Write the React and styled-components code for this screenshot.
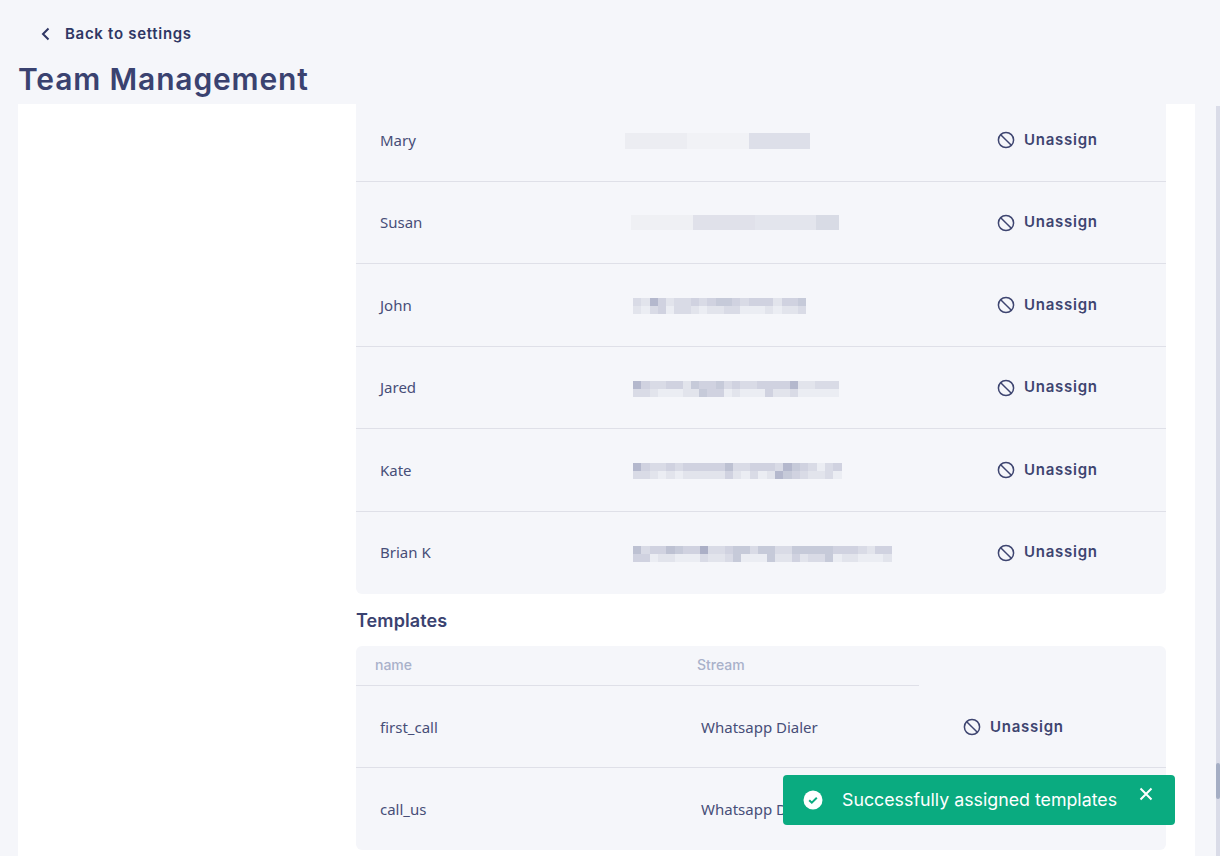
import styled, { createGlobalStyle } from 'styled-components'

const GlobalStyle = createGlobalStyle`
  html, body {
    margin: 0;
    padding: 0;
    background: #f5f6fa;
  }
`

const Page = styled.div`
  position: relative;
  width: 1220px;
  height: 856px;
  overflow: hidden;
  display: flex;
  flex-direction: column;
  background: #f5f6fa;
  color: #3a4270;
  font-family: 'Noto Sans', sans-serif;
`

const Header = styled.header`
  height: 104px;
  flex: none;
  box-sizing: border-box;
  padding: 24px 0 0 18px;
`

const BackLink = styled.a`
  display: flex;
  align-items: center;
  gap: 15px;
  height: 20px;
  padding-left: 23px;
  font: 600 15px/20px Inter, sans-serif;
  letter-spacing: 0.7px;
  color: #2f3664;
`

const Title = styled.h1`
  margin: 14px 0 0;
  font: 600 30px/42px Inter, sans-serif;
  letter-spacing: 0.85px;
  color: #3a4270;
`

const Panel = styled.main`
  flex: 1;
  min-height: 0;
  overflow: hidden;
  margin: 0 25px 0 18px;
  background: #fff;
  padding: 0 29px 0 338px;
`

const Content = styled.div`
  margin-top: -4.8px;
`

const Table = styled.section`
  background: #f5f6fa;
  border-radius: 6px;
`

const Row = styled.div`
  display: grid;
  grid-template-columns: ${(props) => props.$columns};
  align-items: center;
  height: ${(props) => props.$height};
  box-sizing: border-box;
  border-bottom: 1px solid ${(props) => (props.$last ? 'transparent' : '#dfe0e8')};
`

const Cell = styled.div`
  padding-left: 24px;
  font-size: 15px;
  line-height: 20px;
  color: #474e78;
`

const Action = styled.button`
  display: flex;
  align-items: center;
  gap: 9px;
  padding: 0;
  border: 0;
  background: none;
  font: 600 15px/20px Inter, sans-serif;
  letter-spacing: 0.75px;
  color: #3e4570;
`

const ActionIcon = styled.svg`
  width: 18px;
  height: 18px;
  flex: none;
  margin-top: 1px;
`

const Redacted = styled.div`
  margin-left: ${(props) => props.$offset}px;
  margin-top: ${(props) => props.$shift}px;
  display: flex;
  flex-direction: column;
`

const RedactedLine = styled.div`
  display: flex;
  height: ${(props) => props.$height}px;
`

const RedactedCell = styled.span`
  width: ${(props) => props.$width}px;
  flex: none;
  background: ${(props) => props.$color};
`

const SectionTitle = styled.h2`
  margin: 17px 0 15px;
  font: 600 18px/20px Inter, sans-serif;
  letter-spacing: 0.1px;
  color: #3a4270;
`

const TemplateHead = styled.div`
  display: grid;
  grid-template-columns: 341px 1fr;
  align-items: center;
  width: 563px;
  height: 40px;
  padding-bottom: 2px;
  box-sizing: border-box;
  border-bottom: 1px solid #dfe0e8;
  font: 500 14px/18px Inter, sans-serif;
  color: #a9b1ca;
`

const HeadCell = styled.span`
  padding-left: ${(props) => props.$pad}px;
`

const Toast = styled.div`
  position: absolute;
  left: 783px;
  top: 775px;
  width: 392px;
  height: 50px;
  box-sizing: border-box;
  display: flex;
  align-items: center;
  padding: 0 20px;
  border-radius: 4px;
  background: #0aab80;
  color: #fff;
  font: 400 17.8px/24px Inter, sans-serif;
`

const ToastText = styled.span`
  margin-left: 19px;
  margin-bottom: 1px;
  white-space: nowrap;
`

const ToastClose = styled.button`
  position: absolute;
  top: 11px;
  right: 21px;
  display: flex;
  padding: 0;
  border: 0;
  background: none;
`

const ScrollTrack = styled.div`
  position: absolute;
  top: 106px;
  right: 0;
  bottom: 0;
  width: 4px;
  background: #dadce8;
`

const ScrollThumb = styled.div`
  margin-top: 657px;
  height: 36px;
  border-radius: 2px;
  background: #a5aec4;
`

const shade = (level) => `rgba(60, 70, 120, ${level * 0.05})`

const digitLine = (digits, width) => digits.split('').map((d) => ({ width, color: shade(Number(d)) }))

const members = [
  {
    name: 'Mary',
    offset: 0,
    shift: 3,
    lines: [
      {
        height: 16,
        cells: [
          { width: 62, color: '#ecedf2' },
          { width: 62, color: '#f1f2f6' },
          { width: 61, color: '#dddfe9' },
        ],
      },
    ],
  },
  {
    name: 'Susan',
    offset: 6,
    shift: 1,
    lines: [
      {
        height: 15,
        cells: [
          { width: 62, color: '#eff0f4' },
          { width: 62, color: '#e0e1ea' },
          { width: 61, color: '#e3e5ed' },
          { width: 23, color: '#d8dbe5' },
        ],
      },
    ],
  },
  { name: 'John', offset: 8, shift: 3, cellWidth: 8.25, digits: ['327423343455434442445', '213413321223311121223'] },
  { name: 'Jared', offset: 8, shift: 3, cellWidth: 8.25, digits: ['7433442544534334444722333', '3321112254412111422311111'] },
  { name: 'Kate', offset: 8, shift: 3, cellWidth: 8.35, digits: ['7433434444463344437543134', '3321212222242131275432231'] },
  { name: 'Brian K', offset: 8, shift: 3, cellWidth: 8.35, digits: ['6344654483345535533555554443244', '4412211132235111522423351221112'] },
]

const templates = [
  { name: 'first_call', stream: 'Whatsapp Dialer' },
  { name: 'call_us', stream: 'Whatsapp Dialer' },
]

function BanIcon() {
  return (
    <ActionIcon viewBox="0 0 18 18" fill="none" stroke="#3e4570" strokeWidth="1.5">
      <circle cx="9" cy="9" r="7.6" />
      <path d="M3.7 3.7l10.6 10.6" />
    </ActionIcon>
  )
}

function Unassign() {
  return (
    <Action>
      <BanIcon />
      Unassign
    </Action>
  )
}

function RedactedText({ member }) {
  const lines = member.lines || member.digits.map((digits) => ({ height: 8, cells: digitLine(digits, member.cellWidth) }))
  return (
    <Redacted $offset={member.offset} $shift={member.shift}>
      {lines.map((line, i) => (
        <RedactedLine key={i} $height={line.height}>
          {line.cells.map((cell, j) => (
            <RedactedCell key={j} $width={cell.width} $color={cell.color} />
          ))}
        </RedactedLine>
      ))}
    </Redacted>
  )
}

export default function App() {
  return (
    <Page>
      <GlobalStyle />
      <Header>
        <BackLink>
          <svg width="9" height="14" viewBox="0 0 9 14" fill="none" stroke="#2f3664" strokeWidth="2">
            <path d="M7.5 1.5L2 7l5.5 5.5" />
          </svg>
          Back to settings
        </BackLink>
        <Title>Team Management</Title>
      </Header>
      <Panel>
        <Content>
          <Table>
            {members.map((member, i) => (
              <Row key={member.name} $columns="269px 372px 1fr" $height="82.5px" $last={i === members.length - 1}>
                <Cell>{member.name}</Cell>
                <RedactedText member={member} />
                <Unassign />
              </Row>
            ))}
          </Table>
          <SectionTitle>Templates</SectionTitle>
          <Table>
            <TemplateHead>
              <HeadCell $pad={19}>name</HeadCell>
              <HeadCell>Stream</HeadCell>
            </TemplateHead>
            {templates.map((template, i) => (
              <Row key={template.name} $columns="321px 286px 1fr" $height="82px" $last={i === templates.length - 1}>
                <Cell>{template.name}</Cell>
                <Cell>{template.stream}</Cell>
                <Unassign />
              </Row>
            ))}
          </Table>
        </Content>
      </Panel>
      <Toast>
        <svg width="20" height="20" viewBox="0 0 20 20">
          <circle cx="10" cy="10" r="9.5" fill="#fff" />
          <path d="M6.2 10.2l2.6 2.5 5-4.9" fill="none" stroke="#0aab80" strokeWidth="2" />
        </svg>
        <ToastText>Successfully assigned templates</ToastText>
        <ToastClose>
          <svg width="16" height="16" viewBox="0 0 16 16" fill="none" stroke="#fff" strokeWidth="2">
            <path d="M2.5 2.5l11 11M13.5 2.5l-11 11" />
          </svg>
        </ToastClose>
      </Toast>
      <ScrollTrack>
        <ScrollThumb />
      </ScrollTrack>
    </Page>
  )
}
